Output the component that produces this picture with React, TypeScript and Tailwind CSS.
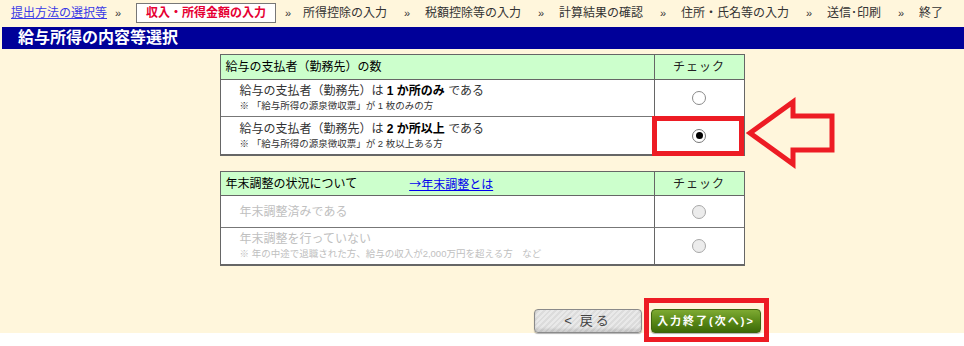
import React from "react";

const font = "font-['Liberation_Sans','Noto_Sans_CJK_JP',sans-serif]";

function Sep({ narrow }: { narrow?: "l" | "r" }) {
  const cls =
    narrow === "l"
      ? "w-[29px] pl-[8px]"
      : narrow === "r"
      ? "w-[27px] pl-[9px]"
      : "w-[38px] pl-[17px]";
  return <span className={`${cls} shrink-0 text-[11px] text-[#333]`}>»</span>;
}

function Radio({ checked, disabled }: { checked?: boolean; disabled?: boolean }) {
  return (
    <div
      className={`w-[14px] h-[14px] rounded-full border flex items-center justify-center ${
        disabled ? "border-[#a8a8a8] bg-[#ececec]" : checked ? "border-[#777] bg-white" : "border-[#8a8a8a] bg-white"
      }`}
    >
      {checked && <div className="w-[7px] h-[7px] rounded-full bg-black" />}
    </div>
  );
}

export default function App() {
  return (
    <div className={`relative w-[964px] h-[346px] bg-white ${font}`}>
      <div className="h-[333px] bg-[#fff6dc] flex flex-col">
        {/* breadcrumb */}
        <div className="h-[26px] flex items-center pl-[11px] text-[12px] leading-[14px] text-[#333] whitespace-nowrap">
          <span className="text-[#3a3ae6] underline">提出方法の選択等</span>
          <Sep narrow="l" />
          <span className="h-[20px] flex items-center px-[9px] border border-[#777] bg-white text-[#e60033] font-bold">
            収入・所得金額の入力
          </span>
          <Sep narrow="r" />
          <span>所得控除の入力</span>
          <Sep />
          <span>税額控除等の入力</span>
          <Sep />
          <span>計算結果の確認</span>
          <Sep />
          <span>住所・氏名等の入力</span>
          <Sep />
          <span>送信･印刷</span>
          <Sep />
          <span>終了</span>
        </div>

        {/* title */}
        <div className="ml-[2px] mt-[1px] h-[22px] bg-[#000099] flex items-center pl-[16px] text-white font-bold text-[16px] leading-[18px]">
          給与所得の内容等選択
        </div>

        {/* table 1 */}
        <div className="mx-auto mt-[5px] w-[525px] border border-b-2 border-[#666] bg-white">
          <div className="grid grid-cols-[433px_1fr] h-[25px] bg-[#ccffcc] border-b border-[#666]">
            <div className="pl-[5px] flex items-center text-[12px] text-black">給与の支払者（勤務先）の数</div>
            <div className="border-l border-[#666] flex items-center justify-center text-[12px] text-[#222] tracking-[1px]">チェック</div>
          </div>
          <div className="grid grid-cols-[433px_1fr] h-[37px] border-b border-[#777]">
            <div className="pl-[19px] flex flex-col justify-center text-[#333]">
              <div className="text-[12px] leading-[15px]">
                給与の支払者（勤務先）は <b className="text-black">1 か所のみ</b> である
              </div>
              <div className="text-[9.5px] leading-[13px]">※ 「給与所得の源泉徴収票」が 1 枚のみの方</div>
            </div>
            <div className="border-l border-[#666] flex items-center justify-center">
              <Radio />
            </div>
          </div>
          <div className="grid grid-cols-[433px_1fr] h-[37px]">
            <div className="pl-[19px] flex flex-col justify-center text-[#333]">
              <div className="text-[12px] leading-[15px]">
                給与の支払者（勤務先）は <b className="text-black">2 か所以上</b> である
              </div>
              <div className="text-[9.5px] leading-[13px]">※ 「給与所得の源泉徴収票」が 2 枚以上ある方</div>
            </div>
            <div className="border-l border-[#666] flex items-center justify-center">
              <Radio checked />
            </div>
          </div>
        </div>

        {/* table 2 */}
        <div className="mx-auto mt-[15px] w-[525px] border border-b-2 border-[#666] bg-white">
          <div className="grid grid-cols-[433px_1fr] h-[24px] bg-[#ccffcc] border-b border-[#666]">
            <div className="pl-[5px] flex items-center text-[12px] text-black">
              <span>年末調整の状況について</span>
              <span className="ml-[52px] text-[#0000ee] underline font-['Noto_Sans_CJK_JP',sans-serif]">→年末調整とは</span>
            </div>
            <div className="border-l border-[#666] flex items-center justify-center text-[12px] text-[#222] tracking-[1px]">チェック</div>
          </div>
          <div className="grid grid-cols-[433px_1fr] h-[32px] border-b border-[#777]">
            <div className="pl-[19px] flex items-center text-[12px] text-[#c0c0c0]">年末調整済みである</div>
            <div className="border-l border-[#666] flex items-center justify-center">
              <Radio disabled />
            </div>
          </div>
          <div className="grid grid-cols-[433px_1fr] h-[36px]">
            <div className="pl-[19px] flex flex-col justify-center text-[#c0c0c0]">
              <div className="text-[12px] leading-[15px]">年末調整を行っていない</div>
              <div className="text-[9.5px] leading-[13px]">※ 年の中途で退職された方、給与の収入が2,000万円を超える方　など</div>
            </div>
            <div className="border-l border-[#666] flex items-center justify-center">
              <Radio disabled />
            </div>
          </div>
        </div>

        {/* buttons */}
        <div className="mt-[43px] flex items-center pl-[534px] gap-[9px]">
          <div className="w-[108px] h-[24px] rounded-[4px] border border-[#8a8a8a] bg-[repeating-linear-gradient(135deg,#e9e9e9_0px,#e9e9e9_2px,#dcdcdc_2px,#dcdcdc_4px)] shadow-[inset_0_-3px_3px_rgba(0,0,0,0.12),0_1px_1px_rgba(0,0,0,0.3)] flex items-center justify-center text-[13px] text-[#444]">
            <span className="mr-[8px] font-['Liberation_Sans',sans-serif]">&lt;</span>
            <span className="tracking-[3px]">戻る</span>
          </div>
          <div className="w-[110px] h-[24px] rounded-[4px] border border-[#3d6410] bg-gradient-to-b from-[#7eaa32] via-[#5a8a18] to-[#3d6a08] shadow-[0_1px_1px_rgba(0,0,0,0.3)] flex items-center justify-center text-[11px] font-bold text-white tracking-[2px] whitespace-nowrap">
            入力終了(次へ)&gt;
          </div>
        </div>
      </div>

      {/* annotations */}
      <div className="absolute left-[652px] top-[116px] w-[92px] h-[40px] border-[5px] border-[#ed1c24]" />
      <div className="absolute left-[644px] top-[298px] w-[125px] h-[44px] border-[5px] border-[#ed1c24]" />
      <svg className="absolute left-[740px] top-[90px]" width="100" height="85" viewBox="0 0 100 85">
        <polygon
          points="10,43 53,12 53,26 92,26 92,60 53,60 53,74"
          fill="none"
          stroke="#ed1c24"
          strokeWidth="5"
          strokeLinejoin="miter"
        />
      </svg>
    </div>
  );
}
